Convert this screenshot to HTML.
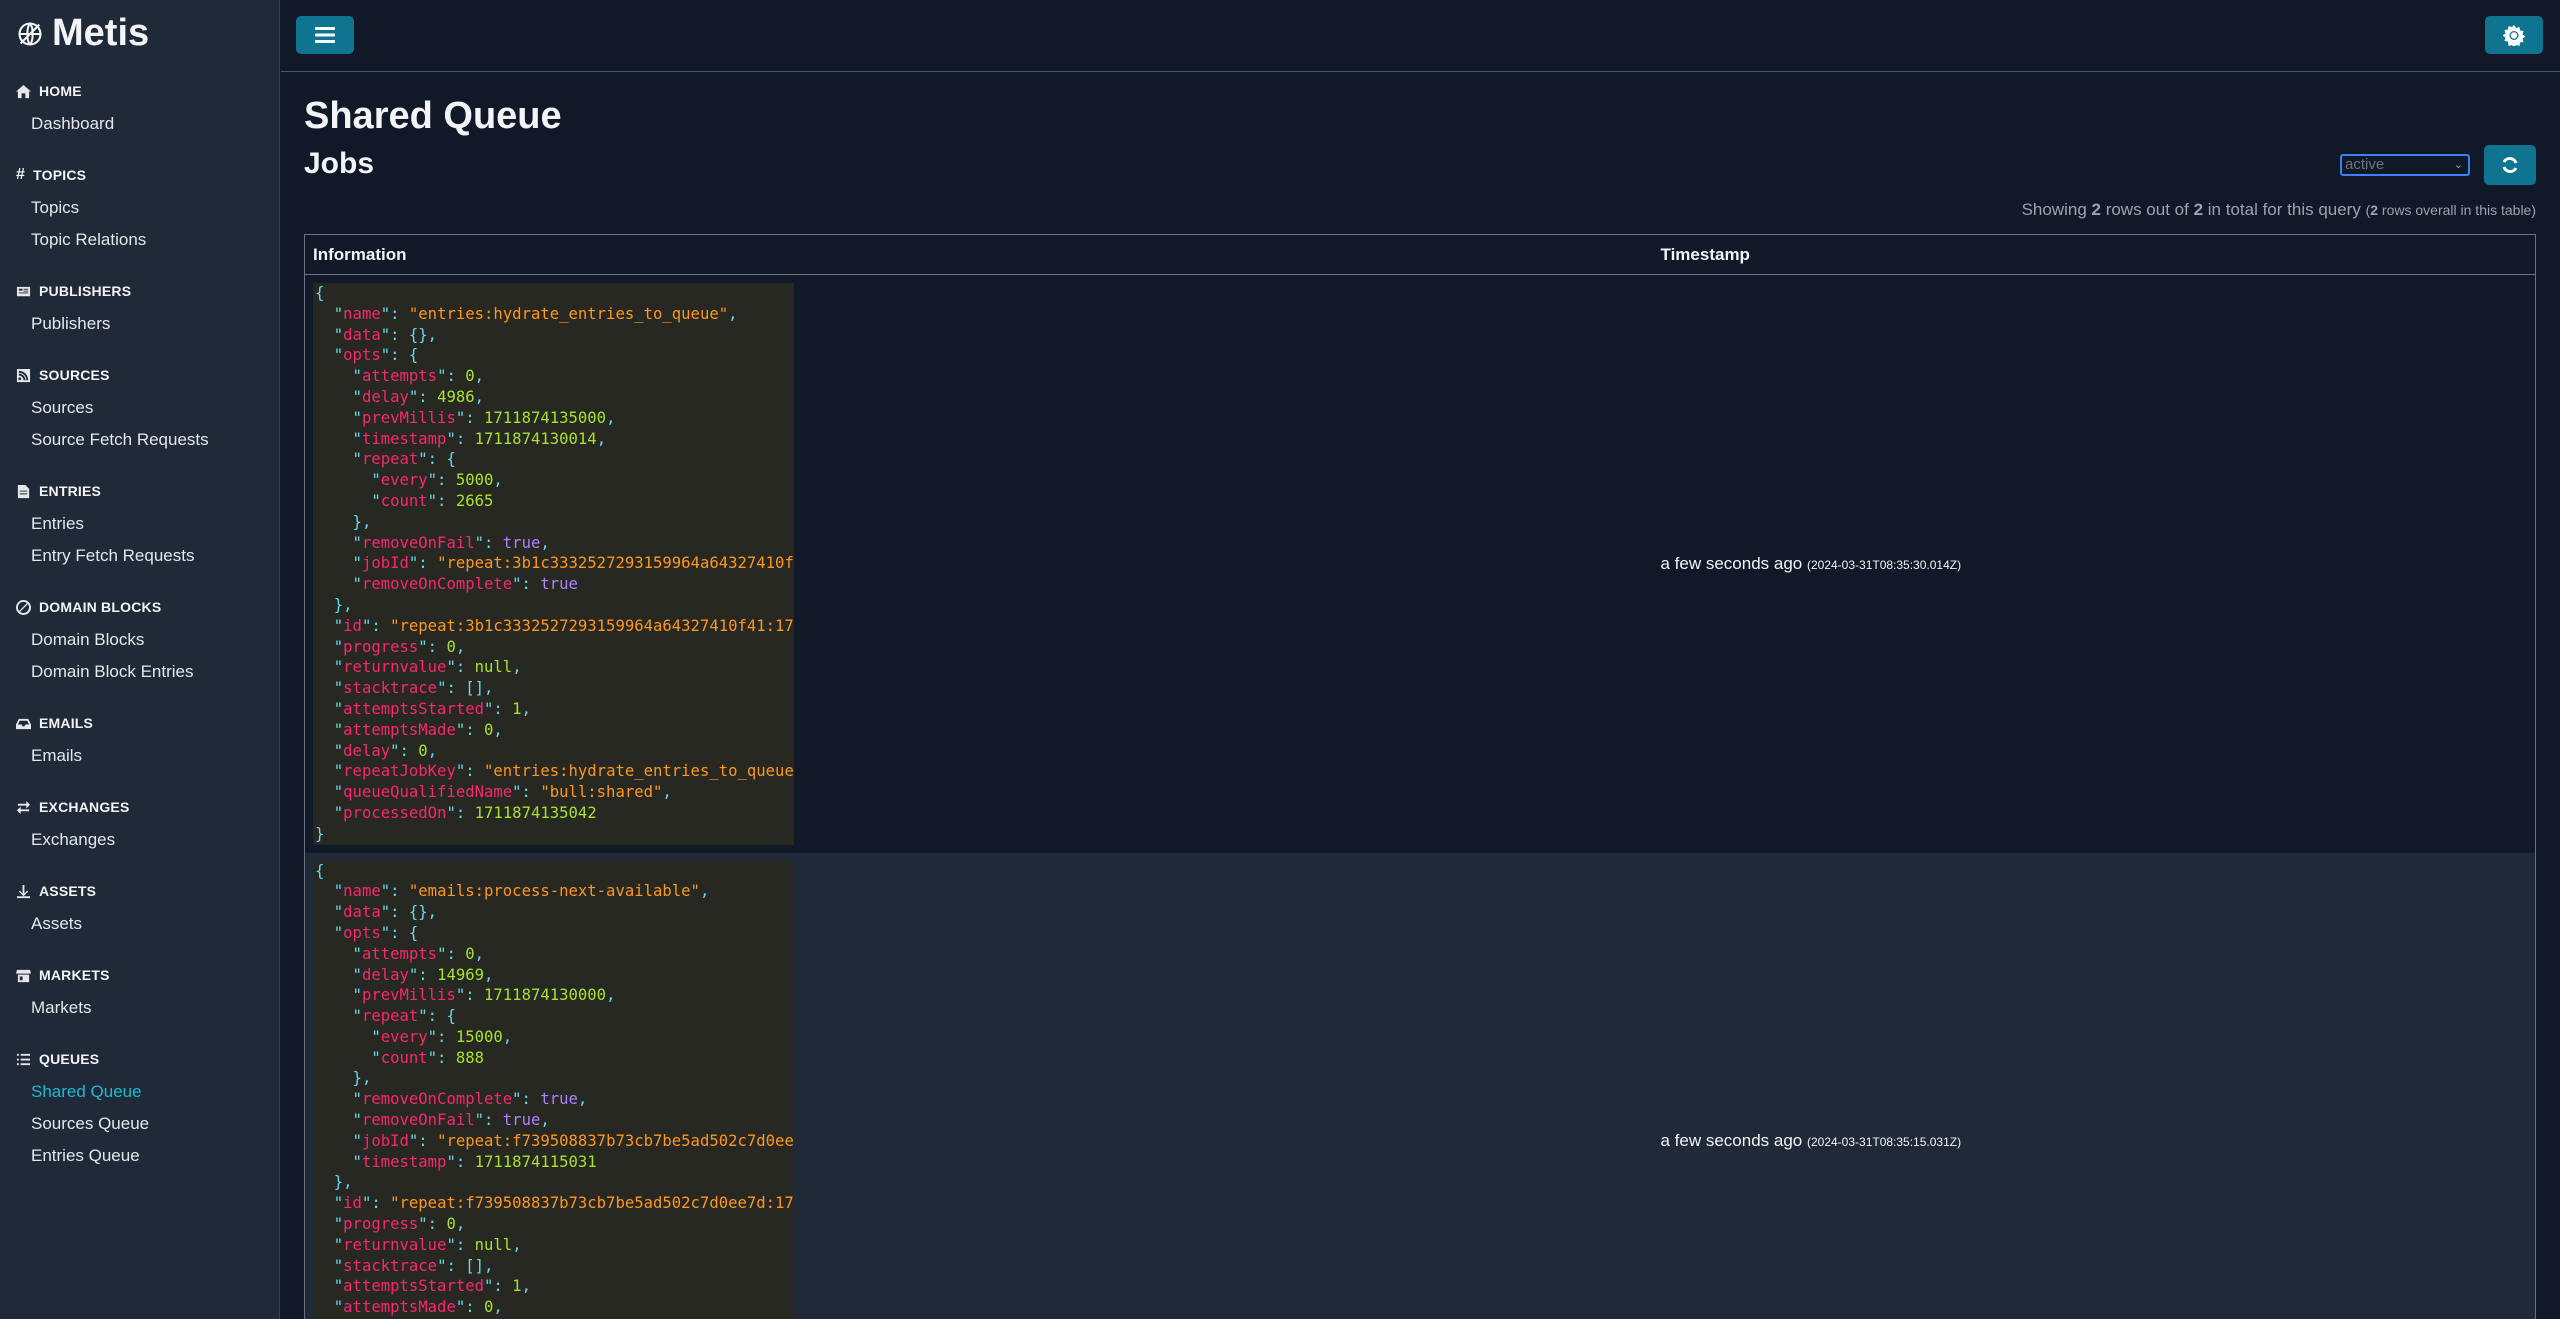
<!DOCTYPE html>
<html><head><meta charset="utf-8"><style>
*{box-sizing:border-box;margin:0;padding:0}
html{width:2560px;height:1319px;overflow:hidden}
body{width:2560px;height:1319px;overflow:hidden;background:#111827;font-family:"Liberation Sans",sans-serif;color:#f3f4f6;position:relative}
#side{position:absolute;left:0;top:0;width:280px;height:1319px;background:#1f2937;border-right:1px solid #374151}
.logo{position:absolute;left:16px;top:12px;font-size:38px;font-weight:bold;color:#f3f4f6;display:flex;align-items:center;gap:8px}
#nav{position:absolute;left:0;top:74px;width:280px}
.sec{margin-bottom:18px}
.h{height:34px;display:flex;align-items:center;padding-left:16px;font-size:14px;font-weight:bold;gap:8px;letter-spacing:.2px}
.h svg{width:15px;height:15px;fill:#e5e7eb}
.it{height:32px;line-height:32px;padding-left:31px;font-size:17px;color:#e5e7eb}
.act{color:#22b8cf}
#top{position:absolute;left:281px;top:0;right:0;height:72px;border-bottom:1px solid #4b5563}
.btn{position:absolute;background:#0e7490;border-radius:5px;display:flex;align-items:center;justify-content:center}
h1{position:absolute;left:304px;top:95px;font-size:38px;font-weight:bold}
h2{position:absolute;left:304px;top:147px;font-size:30px;font-weight:bold}
.sel{position:absolute;left:2340px;top:154px;width:130px;height:22px;border:2px solid #3b82f6;border-radius:3px;background:#111827;color:#6b7280;font-size:15px;padding-left:3px;line-height:18px}
.show{position:absolute;right:24px;top:200px;font-size:17px;color:#9ca3af}
.show small{font-size:14px}
#clip{position:absolute;left:0;top:0;width:2560px;height:1319px;overflow:hidden}
table{position:absolute;left:304px;top:234px;width:2232px;border-collapse:collapse;border:1px solid #6b7280}
th{height:40px;text-align:left;font-size:17px;padding-left:8px;border-bottom:1px solid #6b7280}
td{vertical-align:middle;padding:8px 0 8px 8px;font-size:17px}
tr.r2{background:#1f2937}
pre{width:481px;overflow:hidden;background:#272822;font-family:"DejaVu Sans Mono","Liberation Mono",monospace;font-size:15.6px;line-height:20.8px;color:#66d9ef;padding:0 2px;white-space:pre}
k{color:#f92672}o{color:#fd971f}n{color:#a6e22e}t{color:#ae81ff}
.ts small{font-size:12px}
</style></head><body>
<div id="clip">
<div id="side">
<div class="logo"><svg width="28" height="28" viewBox="0 0 24 24" fill="none" stroke="#f3f4f6" stroke-width="1.8"><circle cx="12" cy="12" r="9"/><path d="M3 12h18M12 3c3 3 3 15 0 18M12 3c-3 3-3 15 0 18M4 20L20 4"/></svg>Metis</div>
<div id="nav">
<div class="sec"><div class="h"><svg viewBox="0 0 16 16"><path d="M8 1L0 8h2v7h4v-5h4v5h4V8h2z"/></svg>HOME</div><div class="it">Dashboard</div></div>
<div class="sec"><div class="h"><span style="font-size:16px">#</span>TOPICS</div><div class="it">Topics</div><div class="it">Topic Relations</div></div>
<div class="sec"><div class="h"><svg viewBox="0 0 16 16"><path d="M1 3h14v10H1zM3 5v2h4V5zm5 0v1h5V5zm0 2v1h5V7zM3 9v1h10V9z"/></svg>PUBLISHERS</div><div class="it">Publishers</div></div>
<div class="sec"><div class="h"><svg viewBox="0 0 16 16"><path d="M1 1h14v14H1zm3 9a1.5 1.5 0 100 3 1.5 1.5 0 000-3zM3 6v2a5 5 0 015 5h2A7 7 0 003 6zm0-3v2a8 8 0 018 8h2A10 10 0 003 3z"/></svg>SOURCES</div><div class="it">Sources</div><div class="it">Source Fetch Requests</div></div>
<div class="sec"><div class="h"><svg viewBox="0 0 16 16"><path d="M2 1h8l4 4v10H2zm2 6v1h8V7zm0 3v1h8v-1z"/></svg>ENTRIES</div><div class="it">Entries</div><div class="it">Entry Fetch Requests</div></div>
<div class="sec"><div class="h"><svg viewBox="0 0 16 16"><path d="M8 0a8 8 0 110 16A8 8 0 018 0zm0 2a6 6 0 00-4.7 9.7l8.4-8.4A6 6 0 008 2zm4.7 2.3l-8.4 8.4A6 6 0 0012.7 4.3z"/></svg>DOMAIN BLOCKS</div><div class="it">Domain Blocks</div><div class="it">Domain Block Entries</div></div>
<div class="sec"><div class="h"><svg viewBox="0 0 16 16"><path d="M3 3h10l3 6v5H0V9zm1 2L2 9h4l1 2h2l1-2h4l-2-4z"/></svg>EMAILS</div><div class="it">Emails</div></div>
<div class="sec"><div class="h"><svg viewBox="0 0 16 16"><path d="M11 1l4 4-4 4V6H2V4h9zM5 7v3h9v2H5v3l-4-4z"/></svg>EXCHANGES</div><div class="it">Exchanges</div></div>
<div class="sec"><div class="h"><svg viewBox="0 0 16 16"><path d="M7 1h2v9l3-3 1 1-5 5-5-5 1-1 3 3zM1 13h14v2H1z"/></svg>ASSETS</div><div class="it">Assets</div></div>
<div class="sec"><div class="h"><svg viewBox="0 0 16 16"><path d="M1 2h14l1 4H0zm1 5h12v8H2zm2 2v4h3V9z"/></svg>MARKETS</div><div class="it">Markets</div></div>
<div class="sec"><div class="h"><svg viewBox="0 0 16 16"><path d="M1 2h2v2H1zm4 0h10v2H5zM1 7h2v2H1zm4 0h10v2H5zm-4 5h2v2H1zm4 0h10v2H5z"/></svg>QUEUES</div><div class="it act">Shared Queue</div><div class="it">Sources Queue</div><div class="it">Entries Queue</div></div>
</div>
</div>
<div id="top"></div>
<div class="btn" style="left:296px;top:16px;width:58px;height:38px"><svg width="20" height="18" viewBox="0 0 20 18" fill="#fff"><rect y="1" width="20" height="3" rx="1"/><rect y="7.5" width="20" height="3" rx="1"/><rect y="14" width="20" height="3" rx="1"/></svg></div>
<div class="btn" style="left:2485px;top:16px;width:58px;height:38px"><svg width="22" height="22" viewBox="0 0 22 22" fill="#fff"><path d="M11 1l2 3 3.5-1 .5 3.5 3.5.5-1 3.5 3 2-3 2 1 3.5-3.5.5-.5 3.5-3.5-1-2 3-2-3-3.5 1L5 17.5 1.5 17l1-3.5-3-2 3-2-1-3.5L5 5.5 5.5 2 9 3z"/><circle cx="11" cy="11.5" r="4.5" fill="#0e7490"/><circle cx="11" cy="11.5" r="3.2" fill="#fff"/></svg></div>
<h1>Shared Queue</h1>
<h2>Jobs</h2>
<div class="sel">active<span style="position:absolute;right:5px;top:0;font-size:11px;color:#9ca3af">⌄</span></div>
<div class="btn" style="left:2484px;top:145px;width:52px;height:40px"><svg width="20" height="20" viewBox="0 0 20 20" fill="none" stroke="#fff" stroke-width="3"><path d="M16 8a6.5 6.5 0 00-12-1M4 12a6.5 6.5 0 0012 1"/></svg></div>
<div class="show">Showing <b>2</b> rows out of <b>2</b> in total for this query <small>(<b>2</b> rows overall in this table)</small></div>
<table>
<tr><th style="width:1348px">Information</th><th>Timestamp</th></tr>
<tr><td><pre>{
  "<k>name</k>": <o>"entries:hydrate_entries_to_queue"</o>,
  "<k>data</k>": {},
  "<k>opts</k>": {
    "<k>attempts</k>": <n>0</n>,
    "<k>delay</k>": <n>4986</n>,
    "<k>prevMillis</k>": <n>1711874135000</n>,
    "<k>timestamp</k>": <n>1711874130014</n>,
    "<k>repeat</k>": {
      "<k>every</k>": <n>5000</n>,
      "<k>count</k>": <n>2665</n>
    },
    "<k>removeOnFail</k>": <t>true</t>,
    "<k>jobId</k>": <o>"repeat:3b1c3332527293159964a64327410f41"</o>,
    "<k>removeOnComplete</k>": <t>true</t>
  },
  "<k>id</k>": <o>"repeat:3b1c3332527293159964a64327410f41:1711874135000"</o>,
  "<k>progress</k>": <n>0</n>,
  "<k>returnvalue</k>": <n>null</n>,
  "<k>stacktrace</k>": [],
  "<k>attemptsStarted</k>": <n>1</n>,
  "<k>attemptsMade</k>": <n>0</n>,
  "<k>delay</k>": <n>0</n>,
  "<k>repeatJobKey</k>": <o>"entries:hydrate_entries_to_queue"</o>,
  "<k>queueQualifiedName</k>": <o>"bull:shared"</o>,
  "<k>processedOn</k>": <n>1711874135042</n>
}</pre></td><td class="ts">a few seconds ago <small>(2024-03-31T08:35:30.014Z)</small></td></tr>
<tr class="r2"><td><pre>{
  "<k>name</k>": <o>"emails:process-next-available"</o>,
  "<k>data</k>": {},
  "<k>opts</k>": {
    "<k>attempts</k>": <n>0</n>,
    "<k>delay</k>": <n>14969</n>,
    "<k>prevMillis</k>": <n>1711874130000</n>,
    "<k>repeat</k>": {
      "<k>every</k>": <n>15000</n>,
      "<k>count</k>": <n>888</n>
    },
    "<k>removeOnComplete</k>": <t>true</t>,
    "<k>removeOnFail</k>": <t>true</t>,
    "<k>jobId</k>": <o>"repeat:f739508837b73cb7be5ad502c7d0ee7d"</o>,
    "<k>timestamp</k>": <n>1711874115031</n>
  },
  "<k>id</k>": <o>"repeat:f739508837b73cb7be5ad502c7d0ee7d:1711874130000"</o>,
  "<k>progress</k>": <n>0</n>,
  "<k>returnvalue</k>": <n>null</n>,
  "<k>stacktrace</k>": [],
  "<k>attemptsStarted</k>": <n>1</n>,
  "<k>attemptsMade</k>": <n>0</n>,
  "<k>delay</k>": <n>0</n>,
  "<k>repeatJobKey</k>": <o>"emails:process-next-available"</o>,
  "<k>queueQualifiedName</k>": <o>"bull:shared"</o>,
  "<k>processedOn</k>": <n>1711874130042</n>
}</pre></td><td class="ts">a few seconds ago <small>(2024-03-31T08:35:15.031Z)</small></td></tr>
</table>
</div>
</body></html>
